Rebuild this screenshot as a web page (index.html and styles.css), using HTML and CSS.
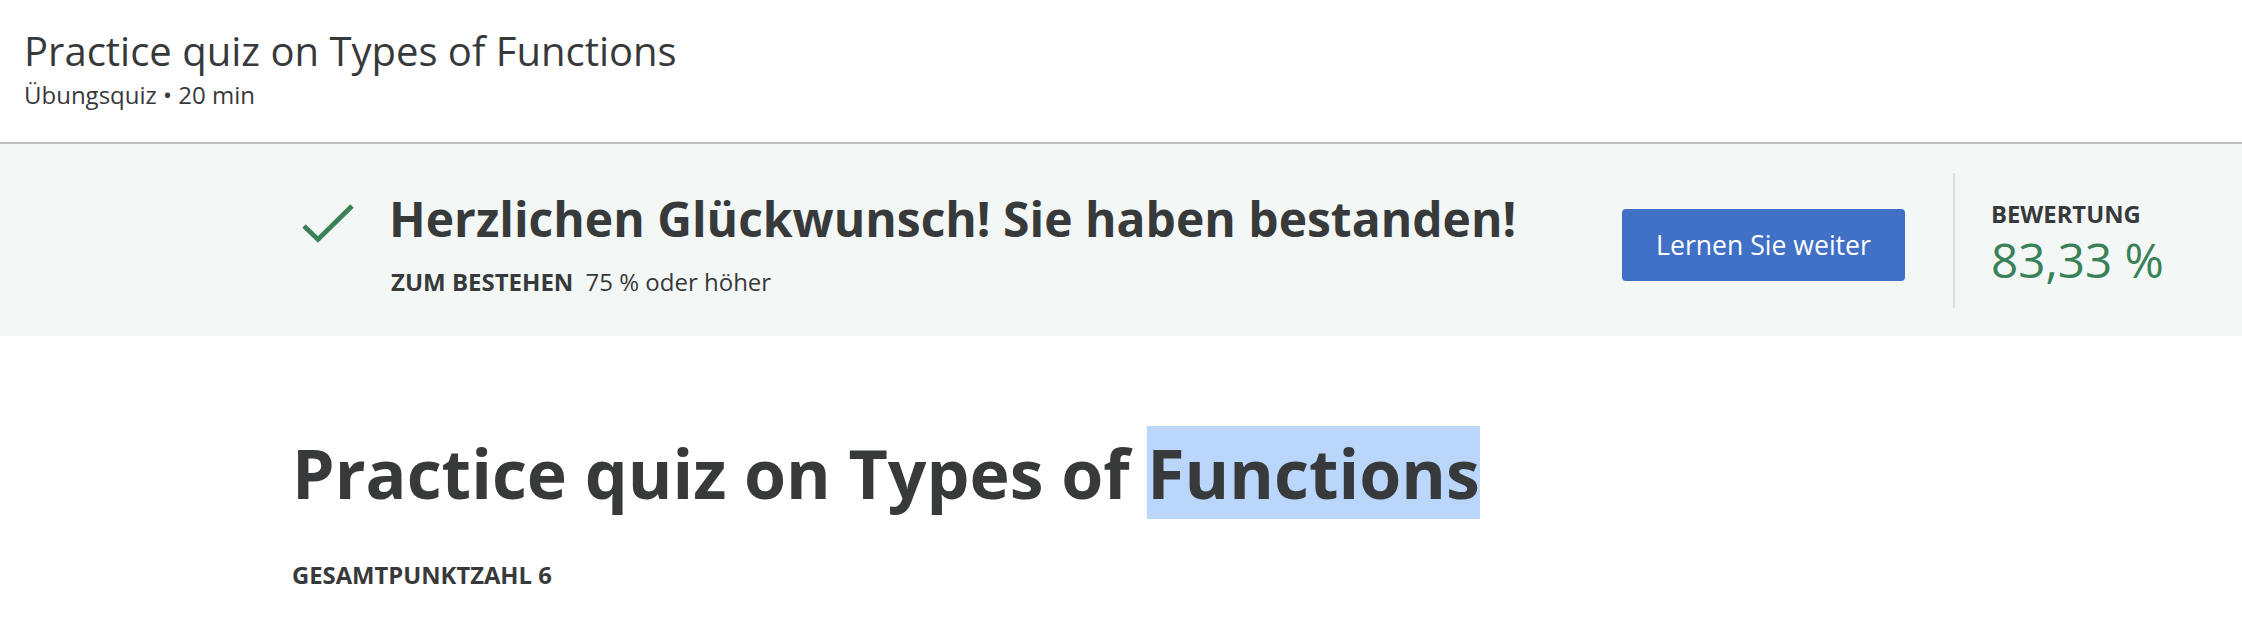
FILE: index.html
```html
<!DOCTYPE html>
<html lang="de">
<head>
<meta charset="utf-8">
<title>Practice quiz on Types of Functions</title>
<link rel="stylesheet" href="styles.css">
</head>
<body>
<header class="top">
  <h1 class="top-title">Practice quiz on Types of Functions</h1>
  <div class="top-meta">Übungsquiz • 20 min</div>
</header>
<section class="banner">
  <div class="result">
    <svg class="check" viewBox="0 0 56 44" width="56" height="44" aria-hidden="true">
      <polyline points="4,24 18,37.5 52,4" fill="none" stroke="#3a8157" stroke-width="4.8" stroke-linejoin="miter"/>
    </svg>
    <div class="result-text">
      <h2 class="result-title">Herzlichen Glückwunsch! Sie haben bestanden!</h2>
      <div class="result-pass"><span class="label">ZUM BESTEHEN</span> 75 % oder höher</div>
    </div>
  </div>
  <button class="btn">Lernen Sie weiter</button>
  <div class="score">
    <div class="label">BEWERTUNG</div>
    <div class="score-value">83,33 %</div>
  </div>
</section>
<main class="content">
  <h1 class="quiz-title">Practice quiz on Types of <span class="sel">Functions</span></h1>
  <div class="total label">GESAMTPUNKTZAHL 6</div>
</main>
</body>
</html>
```
FILE: styles.css
```css
html, body {
  margin: 0;
  padding: 0;
  background: #ffffff;
}
body {
  font-family: "Open Sans", "Noto Sans", "DejaVu Sans", sans-serif;
  color: #37393b;
}
.top {
  padding: 24px 0 30px 24px;
  border-bottom: 2px solid #bfbfbf;
}
.top-title {
  margin: 0;
  font-size: 40px;
  font-weight: 400;
  line-height: 54px;
}
.top-meta {
  font-size: 24px;
  line-height: 34px;
}
.banner {
  display: flex;
  align-items: center;
  height: 192px;
  background: #f3f8f6;
  padding: 0 39px 0 300px;
}
.result {
  display: flex;
  align-items: flex-start;
  gap: 33px;
}
.check {
  display: block;
  margin-top: 19px;
  flex: none;
}
.result-text {
  padding-top: 6px;
}
.result-title {
  margin: 0;
  font-size: 48px;
  font-weight: 700;
  line-height: 60px;
}
.result-pass {
  margin-top: 17px;
  padding-left: 2px;
  font-size: 24px;
  line-height: 32px;
}
.label {
  font-weight: 700;
  font-size: 23.8px;
  line-height: 32px;
}
.result-pass .label {
  font-size: 24px;
  margin-right: 6px;
}
.btn {
  margin-left: auto;
  margin-top: 9px;
  width: 283px;
  height: 72px;
  border: 0;
  border-radius: 4px;
  background: #4071c6;
  color: #ffffff;
  font-family: "Open Sans", "Noto Sans", sans-serif;
  font-size: 26.6px;
  font-weight: 500;
  padding: 0;
}
.score {
  margin-left: 48px;
  width: 250px;
  height: 135px;
  box-sizing: border-box;
  border-left: 2px solid #dcdddd;
  padding: 25px 0 0 36px;
}
.score-value {
  margin-top: 2px;
  color: #3a8157;
  font-size: 47.6px;
  line-height: 56px;
}
.content {
  padding: 0 0 0 292px;
}
.quiz-title {
  margin: 91px 0 0 0;
  font-size: 68px;
  font-weight: 700;
  line-height: 1.362;
}
.sel {
  background: #bad6fb;
}
.total {
  margin-top: 39px;
}
```
